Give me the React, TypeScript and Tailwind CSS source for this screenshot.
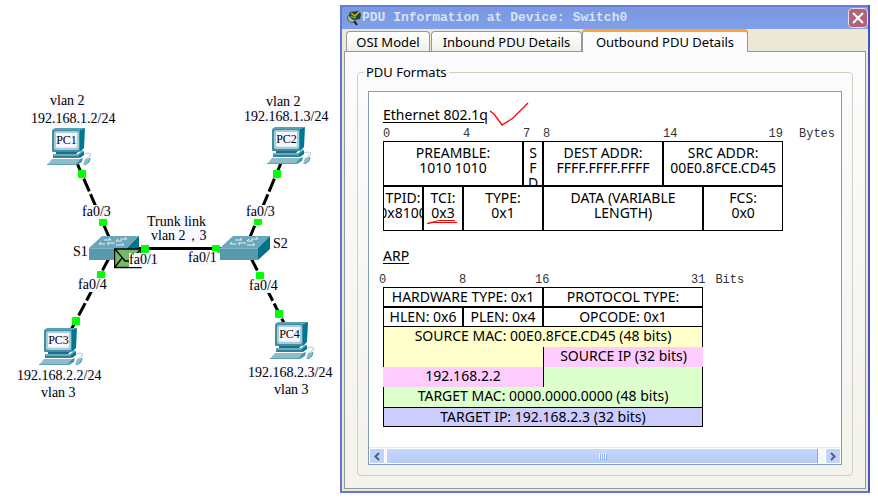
import type { ReactNode } from 'react';
import clsx from 'clsx';

const LABELS = [
  { x: 50, y: 94, text: 'vlan 2' },
  { x: 31, y: 112, text: '192.168.1.2/24' },
  { x: 266, y: 95, text: 'vlan 2' },
  { x: 244, y: 110, text: '192.168.1.3/24' },
  { x: 82, y: 205, text: 'fa0/3' },
  { x: 246, y: 205, text: 'fa0/3' },
  { x: 147, y: 215, text: 'Trunk link' },
  { x: 151, y: 229, text: 'vlan 2，3' },
  { x: 73, y: 245, text: 'S1' },
  { x: 273, y: 237, text: 'S2' },
  { x: 129, y: 253, text: 'fa0/1' },
  { x: 188, y: 251, text: 'fa0/1' },
  { x: 78, y: 278, text: 'fa0/4' },
  { x: 249, y: 279, text: 'fa0/4' },
  { x: 17, y: 369, text: '192.168.2.2/24' },
  { x: 41, y: 386, text: 'vlan 3' },
  { x: 248, y: 366, text: '192.168.2.3/24' },
  { x: 274, y: 383, text: 'vlan 3' },
];

const PCS = [
  { x: 47, y: 128, name: 'PC1' },
  { x: 267, y: 127, name: 'PC2' },
  { x: 39, y: 328, name: 'PC3' },
  { x: 270, y: 322, name: 'PC4' },
];

const SWITCHES = [
  { x: 89, y: 236 },
  { x: 220, y: 236 },
];

const PORTS = [
  [82, 174], [103, 222], [277, 174], [258, 221], [145, 249],
  [216, 249], [101, 275], [76, 321], [260, 276], [279, 314],
];

function PcIcon() {
  return (
    <svg width="46" height="38" viewBox="0 0 46 38" aria-hidden="true">
      <path d="M5 2 8 0H38L33 2Z" fill="#5a9fb3" />
      <path d="M33 2 38 0 37 20 33 24Z" fill="#007890" />
      <rect x="5" y="2" width="28" height="22" rx="1" fill="#3f8ea5" />
      <rect x="7" y="3" width="25" height="19" rx="2" fill="#a9ccd9" />
      <rect x="9" y="5" width="21" height="15" rx="2" fill="#e4eef4" />
      <path d="M9 24H31L29 26H9Z" fill="#1d6f87" />
      <path d="M6 26H31L36 22V25L32 29H6Z" fill="#6ba9bd" />
      <path d="M31 28 37 23V27L33 30Z" fill="#00778f" />
      <path d="M6 28H32L33 30H6Z" fill="#2e8299" />
      <path d="M5 31H33L29 37H0Z" fill="#8dbccb" />
      <path d="M33 31 36 30 35 34 30 37H28Z" fill="#4a93a9" />
      <path d="M0 36H30V37H0Z" fill="#5f9fb3" />
      <path d="M37 26C42 24 45 26 43 28C42 29 40 29 40 31" fill="none" stroke="#b6d4de" strokeWidth="1.2" />
      <path d="M38 31 43 30 42 34 38 37H36Z" fill="#8dbccb" />
      <path d="M43 30 42 34 38 37" fill="none" stroke="#4a93a9" />
    </svg>
  );
}

function SwitchIcon() {
  return (
    <svg width="50" height="24" viewBox="0 0 50 24" aria-hidden="true">
      <path d="M0 12 13 0H50L38 12Z" fill="#6aa7ba" />
      <path d="M38 12 50 0V13L38 24Z" fill="#00718a" />
      <rect y="12" width="38" height="12" fill="#5899ae" />
      <path d="M0 12.5H38" stroke="#7fb5c6" />
      <g fill="none" stroke="#e6f2f6" strokeWidth="1">
        <path d="M15 4H22M22 4 20 2M18 7H26M18 7 20 9M10 8H16M10 8 12 6" />
        <path d="M31 3H38M38 3 36 1M27 5H33M27 5 29 3M27 9H35M35 9 33 7" />
      </g>
    </svg>
  );
}

function Topology() {
  return (
    <section aria-label="Network topology" className="relative w-[340px] shrink-0 font-['Liberation_Serif',serif] text-sm leading-[14px]">
      <svg width="340" height="420" viewBox="0 0 340 420" className="absolute top-0 left-0" aria-hidden="true">
        <g stroke="#000" strokeWidth="3" strokeDasharray="14 3">
          <path d="M77 163 109 237" />
          <path d="M281 163 250 237" />
          <path d="M109 258 71 330" />
          <path d="M251 258 284 323" />
        </g>
        <path d="M138 248.5H222" stroke="#000" strokeWidth="3" />
      </svg>

      {SWITCHES.map((sw) => (
        <div key={sw.x} className="absolute" style={{ left: sw.x, top: sw.y }}>
          <SwitchIcon />
        </div>
      ))}

      {/* packet sitting on the first switch */}
      <svg width="29" height="21" viewBox="0 0 29 21" className="absolute top-[248px] left-[114px]" aria-hidden="true">
        <path d="M.5 1H27V19.500H.5Z" fill="#77b868" stroke="#000" strokeWidth="1.500" />
        <path d="M1 1 11 13H16L27 1M1 19 8 10" fill="none" stroke="#000" strokeWidth="1.300" />
      </svg>

      <svg width="340" height="420" viewBox="0 0 340 420" className="absolute top-0 left-0" aria-hidden="true">
        {PORTS.map(([x, y]) => (
          <rect key={`${x}-${y}`} x={x - 4} y={y - 4} width="8" height="8" rx="1" fill="#0f0" />
        ))}
      </svg>

      {PCS.map((pc) => (
        <div key={pc.name} className="absolute" style={{ left: pc.x, top: pc.y }}>
          <PcIcon />
          <span className="absolute top-[5px] left-[9px] w-[21px] bg-[#f6f6fd] text-center text-xs leading-[14px]">{pc.name}</span>
        </div>
      ))}

      {LABELS.map((label) => (
        <span
          key={`${label.x}-${label.y}`}
          className="absolute bg-[#f8f8ff] whitespace-nowrap"
          style={{ left: label.x, top: label.y }}
        >
          {label.text}
        </span>
      ))}
    </section>
  );
}

function Field({ span, className, children }: { span: number; className?: string; children?: ReactNode }) {
  return (
    <td colSpan={span} className={clsx('p-0 align-top', className)}>
      <div className="flex h-full justify-center overflow-hidden text-center whitespace-nowrap">{children}</div>
    </td>
  );
}

function FrameCell({ span, children }: { span: number; children: ReactNode }) {
  return (
    <Field span={span} className="border border-black">
      <div className="h-[43px] pt-[3px] leading-[15px]">{children}</div>
    </Field>
  );
}

function EthernetTable() {
  return (
    <table className="w-[400px] table-fixed border-separate border-spacing-0">
      <colgroup>
        {Array.from({ length: 20 }, (_, i) => <col key={i} className="w-5" />)}
      </colgroup>
      <tbody>
        <tr>
          <FrameCell span={7}>PREAMBLE:<br />1010 1010</FrameCell>
          <FrameCell span={1}>S<br />F<br />D</FrameCell>
          <FrameCell span={6}>DEST ADDR:<br />FFFF.FFFF.FFFF</FrameCell>
          <FrameCell span={6}>SRC ADDR:<br />00E0.8FCE.CD45</FrameCell>
        </tr>
        <tr>
          <FrameCell span={2}>TPID:<br />0x8100</FrameCell>
          <FrameCell span={2}>
            TCI:<br />
            <span className="relative">
              0x3
              <svg width="32" height="6" viewBox="0 0 32 6" className="absolute top-4 -left-1" aria-hidden="true">
                <path d="M12 1.500H28M0 4.500 12 1.500M1 4.500 6 3.500H30" fill="none" stroke="#f00" />
              </svg>
            </span>
          </FrameCell>
          <FrameCell span={4}>TYPE:<br />0x1</FrameCell>
          <FrameCell span={8}>DATA (VARIABLE<br />LENGTH)</FrameCell>
          <FrameCell span={4}>FCS:<br />0x0</FrameCell>
        </tr>
      </tbody>
    </table>
  );
}

function ArpTable() {
  return (
    <table className="w-[320px] table-fixed border-separate border-spacing-0 leading-[18px]">
      <colgroup>
        {Array.from({ length: 4 }, (_, i) => <col key={i} className="w-20" />)}
      </colgroup>
      <tbody>
        <tr className="h-5">
          <Field span={2} className="border border-black">HARDWARE TYPE: 0x1</Field>
          <Field span={2} className="border border-black">PROTOCOL TYPE:</Field>
        </tr>
        <tr className="h-5">
          <Field span={1} className="border border-black">HLEN: 0x6</Field>
          <Field span={1} className="border border-black">PLEN: 0x4</Field>
          <Field span={2} className="border border-black">OPCODE: 0x1</Field>
        </tr>
        <tr className="h-5">
          <Field span={4} className="border-x border-black bg-[#ffffcc]">SOURCE MAC: 00E0.8FCE.CD45 (48 bits)</Field>
        </tr>
        <tr className="h-5">
          <Field span={2} className="border-l border-black bg-[#ffffcc]" />
          <Field span={2} className="border-l border-black bg-[#ffccff]">SOURCE IP (32 bits)</Field>
        </tr>
        <tr className="h-5">
          <Field span={2} className="bg-[#ffccff]">192.168.2.2</Field>
          <Field span={2} className="border-x border-black bg-[#ddffcc]" />
        </tr>
        <tr className="h-5">
          <Field span={4} className="border-x border-black bg-[#ddffcc]">TARGET MAC: 0000.0000.0000 (48 bits)</Field>
        </tr>
        <tr className="h-5">
          <Field span={4} className="border border-black bg-[#ccccff]">TARGET IP: 192.168.2.3 (32 bits)</Field>
        </tr>
      </tbody>
    </table>
  );
}

function TitleIcon() {
  return (
    <svg width="16" height="16" viewBox="0 0 16 16" aria-hidden="true">
      <circle cx="6" cy="8" r="4.500" fill="#9fb6a8" stroke="#4d5d55" />
      <path d="M4 2 12 1 15 4 14 9 7 10 3 6Z" fill="#1d4a1c" />
      <path d="M5 3 9 6 13 2" fill="none" stroke="#e8a54a" strokeWidth="1.500" />
      <path d="M5 6 8 8 10 7" fill="none" stroke="#5cb04a" strokeWidth="1.500" />
      <path d="M8 11 11 15" stroke="#1b1b1b" strokeWidth="2" />
    </svg>
  );
}

function ScrollBar() {
  const button = 'flex w-4 items-center justify-center rounded-xs border border-white bg-[#c1d3fb]';
  return (
    <div className="flex h-[17px] gap-px border-t border-[#ecebe4] bg-[#f7f7f4]">
      <button type="button" aria-label="Scroll left" className={button}>
        <svg width="8" height="9" viewBox="0 0 8 9" aria-hidden="true"><path d="M6 1 2.500 4.500 6 8" fill="none" stroke="#4d6185" strokeWidth="2" /></svg>
      </button>
      <div className="mr-1.5 flex flex-1 items-center justify-center gap-px rounded-xs border border-r-[#8fa9dc] border-white bg-linear-to-b from-[#c8d7fc] to-[#b5cbf8]">
        {[0, 1, 2, 3].map((i) => <span key={i} className="h-1.5 w-px bg-[#eef4fe] shadow-[1px_1px_0_#8cb0f8]" />)}
      </div>
      <button type="button" aria-label="Scroll right" className={button}>
        <svg width="8" height="9" viewBox="0 0 8 9" aria-hidden="true"><path d="M2 1 5.500 4.500 2 8" fill="none" stroke="#4d6185" strokeWidth="2" /></svg>
      </button>
    </div>
  );
}

function PduWindow() {
  const tab = 'h-5 rounded-t-sm border border-b-0 border-[#919b9c] bg-linear-to-b from-white to-[#f0f0ea] leading-[18px]';
  const ruler = "font-['Liberation_Mono',monospace] text-xs leading-[14px] text-[#333]";
  return (
    <section
      aria-label="PDU Information"
      className="mt-[5px] mr-2 flex-1 border-2 border-t-0 border-[#6675d8] border-r-[#4754b8] bg-[#ece9d8] font-['Noto_Sans',sans-serif] text-[13px] text-black"
    >
      <header className="flex h-6 items-center border-t-2 border-[#6480d8] bg-linear-to-b from-[#7b97e0] to-[#7fa0e8] pl-1">
        <TitleIcon />
        <h1 className="flex-1 font-['Liberation_Mono',monospace] text-[13px] font-bold whitespace-nowrap text-[#d5e2fa]">
          PDU Information at Device: Switch0
        </h1>
        <button type="button" aria-label="Close" className="flex h-5 w-5 items-center justify-center rounded-sm border border-[#e9dbe8] bg-[#b0647a]">
          <svg width="12" height="12" viewBox="0 0 12 12" aria-hidden="true"><path d="M1 1 11 11M11 1 1 11" stroke="#fff" strokeWidth="2" /></svg>
        </button>
      </header>

      <div className="px-0.5 pb-0.5">
        <div role="tablist" className="flex h-[22px] items-end pl-0.5">
          <button type="button" role="tab" className={clsx(tab, 'w-[84px]')}>OSI Model</button>
          <button type="button" role="tab" className={clsx(tab, 'ml-px w-[151px]')}>Inbound PDU Details</button>
          <button
            type="button"
            role="tab"
            aria-selected="true"
            className="relative z-10 -mb-px h-[23px] w-[166px] rounded-t-sm border-x border-t-3 border-x-[#919b9c] border-t-[#fba52f] bg-[#fcfcfe] leading-[18px]"
          >
            Outbound PDU Details
          </button>
        </div>

        <div role="tabpanel" className="border border-[#919b9c] bg-linear-to-b from-[#fcfcfe] to-[#f3f2ec] px-3 pt-3 pb-3">
          <fieldset className="rounded-sm border border-[#d0d0bf] px-2.5 pb-2.5">
            <legend className="-ml-1 px-0.5 leading-[16px]">PDU Formats</legend>
            <div className="mt-[11px] border border-[#7f9db9] bg-white">
              <div className="overflow-hidden pt-[14px] pb-5 pl-3.5 text-sm">
                <div className="flex">
                  <h2 className="leading-[17px] underline underline-offset-2">Ethernet 802.1q</h2>
                  <svg width="42" height="26" viewBox="0 0 42 26" className="-mt-1 -mb-5" aria-hidden="true">
                    <path d="M2 9 6 12 14 23 25 16 40 1" fill="none" stroke="#f00" strokeWidth="1.3" />
                  </svg>
                </div>
                <div className={clsx(ruler, 'mt-1 grid grid-cols-[repeat(20,20px)_auto]')}>
                  <span className="col-start-1">0</span>
                  <span className="col-start-5">4</span>
                  <span className="col-start-8">7</span>
                  <span className="col-start-9">8</span>
                  <span className="col-start-15">14</span>
                  <span className="col-start-20 text-right">19</span>
                  <span className="col-start-21 pl-4">Bytes</span>
                </div>
                <EthernetTable />

                <h2 className="mt-4 leading-[17px] underline underline-offset-2">ARP</h2>
                <div className={clsx(ruler, '-ml-1 mt-[9px] grid grid-cols-[80px_76px_156px_auto]')}>
                  <span>0</span>
                  <span>8</span>
                  <span>16</span>
                  <span className="flex gap-2.5"><span>31</span><span>Bits</span></span>
                </div>
                <ArpTable />
              </div>
              <ScrollBar />
            </div>
          </fieldset>
        </div>
      </div>
    </section>
  );
}

export default function App() {
  return (
    <main className="flex min-h-screen items-start bg-white text-black">
      <Topology />
      <PduWindow />
    </main>
  );
}
